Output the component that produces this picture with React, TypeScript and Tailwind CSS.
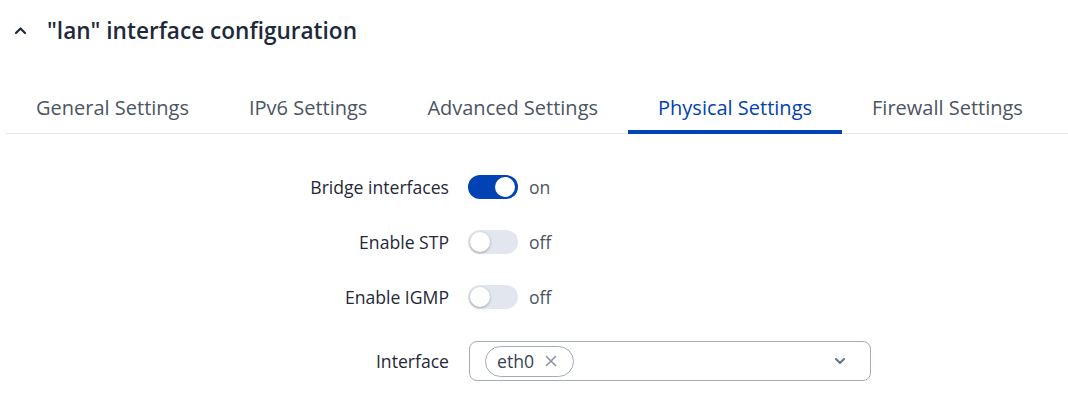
import React from "react";

const tabs = ["General Settings", "IPv6 Settings", "Advanced Settings", "Physical Settings", "Firewall Settings"];

function Toggle({ on }: { on: boolean }) {
  return (
    <div className="flex items-center gap-[11px]">
      <div
        className={
          on
            ? "relative h-[24px] w-[50px] rounded-full bg-[#0142b4]"
            : "relative h-[24px] w-[50px] rounded-full bg-[#e2e6ee]"
        }
      >
        <div
          className={
            on
              ? "absolute right-[3px] top-[2px] h-[20px] w-[20px] rounded-full bg-white"
              : "absolute left-[2px] top-[2px] h-[20px] w-[20px] rounded-full bg-white shadow-[0_1px_3px_rgba(0,0,0,0.3)]"
          }
        />
      </div>
      <span className="text-[17.6px] text-[#4b5563]">{on ? "on" : "off"}</span>
    </div>
  );
}

export default function App() {
  return (
    <div className="h-[399px] w-[1068px] bg-white font-['Open_Sans',sans-serif] overflow-hidden">
      <div className="flex h-[60px] items-center pl-[14px] pt-[1px]">
        <svg width="13" height="9" viewBox="0 0 13 9" className="mr-[20px]">
          <path d="M2 7 L6.5 2.5 L11 7" fill="none" stroke="#1e293b" strokeWidth="2.2" strokeLinecap="round" strokeLinejoin="round" />
        </svg>
        <h1 className="text-[22.6px] font-semibold text-[#1e293b]">"lan" interface configuration</h1>
      </div>
      <div className="mt-[20px] ml-[6px] flex border-b border-[#e2e8f0]">
        {tabs.map((t, i) => (
          <div
            key={t}
            className={
              i === 3
                ? "flex h-[54px] items-center border-b-4 border-[#0142b4] px-[30px] pt-[5px] text-[20px] text-[#0142b4] -mb-px"
                : "flex h-[54px] items-center border-b-4 border-transparent px-[30px] pt-[5px] text-[20px] text-[#4b5563] -mb-px"
            }
          >
            {t}
          </div>
        ))}
      </div>
      <div className="mt-[41px] flex flex-col gap-[31px]">
        <div className="flex h-[24px] items-center">
          <div className="w-[449px] text-right text-[17.6px] text-[#1f2937]">Bridge interfaces</div>
          <div className="ml-[19px]"><Toggle on={true} /></div>
        </div>
        <div className="flex h-[24px] items-center">
          <div className="w-[449px] text-right text-[17.6px] text-[#1f2937]">Enable STP</div>
          <div className="ml-[19px]"><Toggle on={false} /></div>
        </div>
        <div className="flex h-[24px] items-center">
          <div className="w-[449px] text-right text-[17.6px] text-[#1f2937]">Enable IGMP</div>
          <div className="ml-[19px]"><Toggle on={false} /></div>
        </div>
        <div className="mt-px flex h-[40px] items-center">
          <div className="w-[449px] text-right text-[17.6px] text-[#1f2937]">Interface</div>
          <div className="ml-[20px] flex h-[40px] w-[402px] items-center rounded-[8px] border border-[#a3acbb] pl-[15px] pr-[24px]">
            <div className="flex h-[31px] items-center rounded-full border border-[#a3acbb] pl-[11px] pr-[16px] text-[17.6px] text-[#374151]">
              eth0
              <svg width="12" height="12" viewBox="0 0 12 12" className="ml-[11px]">
                <path d="M1.5 1.5 L10.5 10.5 M10.5 1.5 L1.5 10.5" stroke="#8b95a5" strokeWidth="1.6" strokeLinecap="round" />
              </svg>
            </div>
            <div className="flex-1" />
            <svg width="12" height="8" viewBox="0 0 12 8">
              <path d="M2 2 L6 6 L10 2" fill="none" stroke="#64748b" strokeWidth="2" strokeLinecap="round" strokeLinejoin="round" />
            </svg>
          </div>
        </div>
      </div>
    </div>
  );
}
